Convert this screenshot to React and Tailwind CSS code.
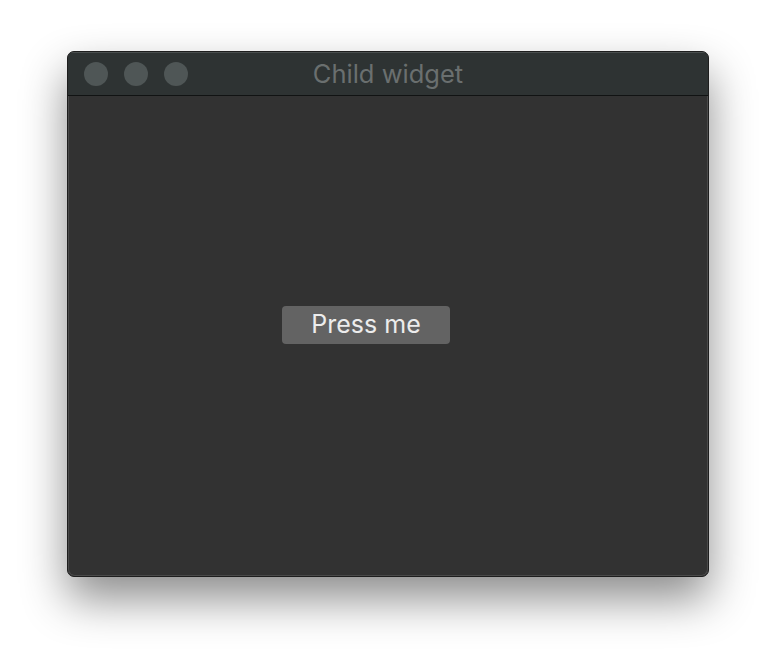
export default function App() {
  return (
    <div className="w-[776px] h-[660px] bg-white pl-[67px] pt-[51px]" style={{ fontFamily: "Inter, 'Noto Sans', sans-serif" }}>
      <div className="w-[642px] h-[526px] rounded-[7px] bg-[#323232] border border-[#1e1e1e] shadow-[0_22px_45px_rgba(0,0,0,0.45)] overflow-hidden flex flex-col">
        <div className="h-[44px] shrink-0 bg-[#2e3333] border-t border-t-[#4a4f4f] border-b border-b-[#111313] relative flex items-center px-[16px] gap-[16px]">
          <div className="w-[24px] h-[24px] rounded-full bg-[#4f5656]" />
          <div className="w-[24px] h-[24px] rounded-full bg-[#4f5656]" />
          <div className="w-[24px] h-[24px] rounded-full bg-[#4f5656]" />
          <div className="absolute inset-0 flex items-center justify-center text-[25.5px] text-[#6a6f6f] pointer-events-none">
            Child widget
          </div>
        </div>
        <div className="flex-1 flex items-center justify-center border-x border-b border-[#4a4a4a] rounded-b-[7px]">
          <button className="w-[168px] h-[38px] rounded-[4px] bg-[#636363] text-[#ececec] text-[25px] leading-none mb-[22px] mr-[44px]">
            Press me
          </button>
        </div>
      </div>
    </div>
  );
}
